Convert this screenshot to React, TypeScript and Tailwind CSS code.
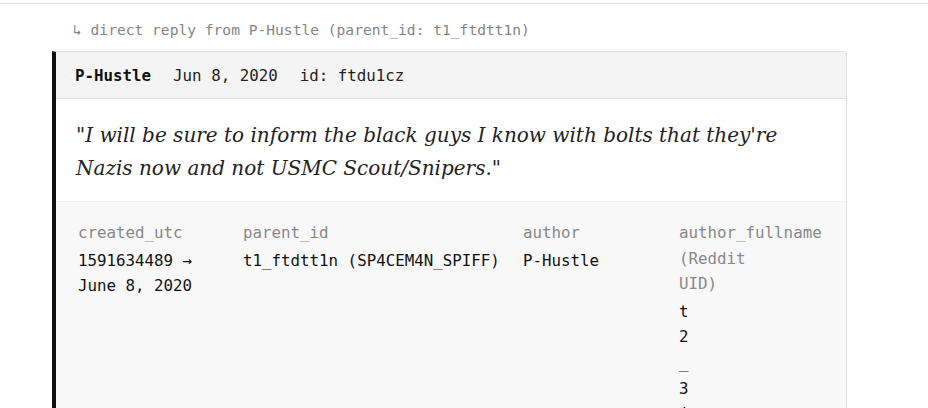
const mono = "font-['DejaVu_Sans_Mono','Liberation_Mono',monospace]";

const fields = [
  { label: "created_utc", value: "1591634489 → June 8, 2020", width: "w-[141px]" },
  { label: "parent_id", value: "t1_ftdtt1n (SP4CEM4N_SPIFF)", width: "w-[256px] whitespace-nowrap" },
  { label: "author", value: "P-Hustle", width: "w-[132px]" },
];

export default function App() {
  return (
    <div className={`min-h-screen bg-white ${mono}`}>
      <div className="h-[4px] border-b border-[#e4e4e4]" />
      <div className="pl-[52px] pr-[81px]">
        <div className="pl-[21px] pt-[16px] pb-[11px] text-[14.6px] leading-[20px] text-[#858585]">
          ↳ direct reply from P-Hustle (parent_id: t1_ftdtt1n)
        </div>
        <div className="overflow-hidden rounded-tr-[4px] border border-l-4 border-[#e0e0e0] border-l-[#111]">
          <div className="flex h-[47px] items-center gap-[22px] border-b border-[#e2e2e2] bg-[#f4f4f4] pl-[19px] pt-[1px] text-[15.8px] text-[#222]">
            <span className="font-bold text-[#111]">P-Hustle</span>
            <span>Jun 8, 2020</span>
            <span>id: ftdu1cz</span>
          </div>
          <div className="bg-white px-5 pt-[20px] pb-[16px] font-['DejaVu_Serif','Liberation_Serif',serif] text-[20px] italic leading-[33px] text-[#222]">
            "I will be sure to inform the black guys I know with bolts that they're Nazis now and not USMC Scout/Snipers."
          </div>
          <div className="flex h-[220px] gap-6 border-t border-[#efefef] bg-[#f8f8f8] pl-[22px] pt-[18px] text-[15.8px] leading-[25.6px]">
            {fields.map((f) => (
              <div key={f.label} className={`${f.width} shrink-0`}>
                <div className="mb-[2px] text-[#888]">{f.label}</div>
                <div className="text-[#111]">{f.value}</div>
              </div>
            ))}
            <div className="w-[142px] shrink-0">
              <div className="mb-[2px] text-[#888]">
                author_fullname
                <br />
                (Reddit
                <br />
                UID)
              </div>
              <div className="w-[10px] break-all text-[#111]">t2_3jvgx</div>
            </div>
          </div>
        </div>
      </div>
    </div>
  );
}
